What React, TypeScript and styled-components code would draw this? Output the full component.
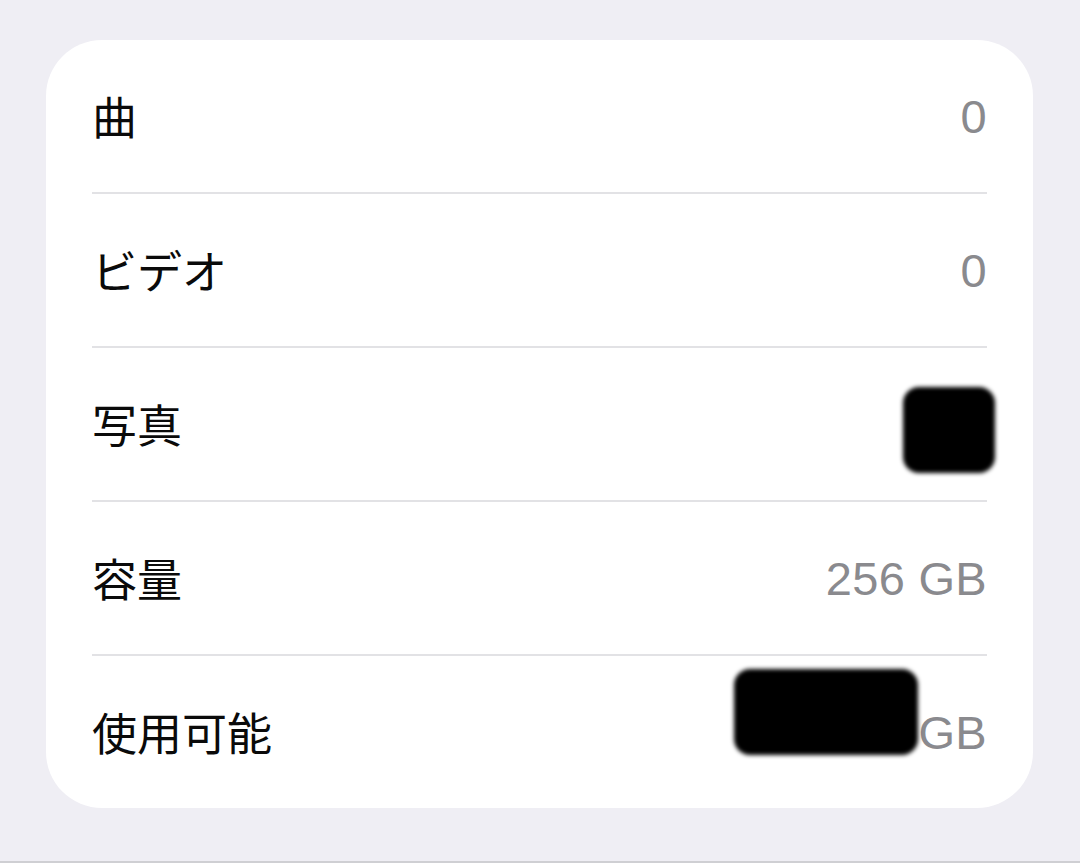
import React from "react";
import styled, { createGlobalStyle } from "styled-components";

const GlobalStyle = createGlobalStyle`
  html, body {
    margin: 0;
    padding: 0;
    background: #efeef4;
  }
  body {
    font-family: "Liberation Sans", "Noto Sans CJK JP", sans-serif;
  }
`;

const Page = styled.div`
  width: 1080px;
  height: 863px;
  box-sizing: border-box;
  padding: 40px 47px 0 46px;
  background: #efeef4;
  border-bottom: 2px solid #cfcfd3;
`;

const Card = styled.div`
  background: #ffffff;
  border-radius: 56px;
  padding: 0 46px;
  display: flex;
  flex-direction: column;
`;

const Row = styled.div<{ $last?: boolean }>`
  box-sizing: border-box;
  height: ${(p) => (p.$last ? 152 : 154)}px;
  display: flex;
  align-items: center;
  justify-content: space-between;
  border-bottom: ${(p) => (p.$last ? "none" : "2px solid #e2e2e5")};
`;

const Label = styled.span`
  font-family: "Noto Sans CJK JP", "Liberation Sans", sans-serif;
  font-size: 45px;
  color: #0a0a0a;
  margin-top: -2px;
`;

const Value = styled.span`
  display: flex;
  align-items: center;
  font-family: "Liberation Sans", "Noto Sans CJK JP", sans-serif;
  font-size: 47px;
  color: #8a8a8e;
  letter-spacing: 0.3px;
`;

const Redaction = styled.span<{ $w: number; $h: number; $lift: number }>`
  display: inline-block;
  width: ${(p) => p.$w}px;
  height: ${(p) => p.$h}px;
  background: #000;
  border-radius: 16px;
  filter: blur(2px);
  margin-bottom: ${(p) => p.$lift * 2}px;
`;

const rows = [
  { label: "曲", value: "0" },
  { label: "ビデオ", value: "0" },
  { label: "写真", redact: { w: 92, h: 86, lift: -6, right: -8 } },
  { label: "容量", value: "256 GB" },
  { label: "使用可能", value: "GB", redact: { w: 184, h: 86, lift: 20, right: 0 } },
];

export default function App() {
  return (
    <>
      <GlobalStyle />
      <Page>
        <Card>
          {rows.map((r, i) => (
            <Row key={r.label} $last={i === rows.length - 1}>
              <Label>{r.label}</Label>
              <Value style={r.redact ? { marginRight: r.redact.right } : undefined}>
                {r.redact && <Redaction $w={r.redact.w} $h={r.redact.h} $lift={r.redact.lift} />}
                {r.value}
              </Value>
            </Row>
          ))}
        </Card>
      </Page>
    </>
  );
}
